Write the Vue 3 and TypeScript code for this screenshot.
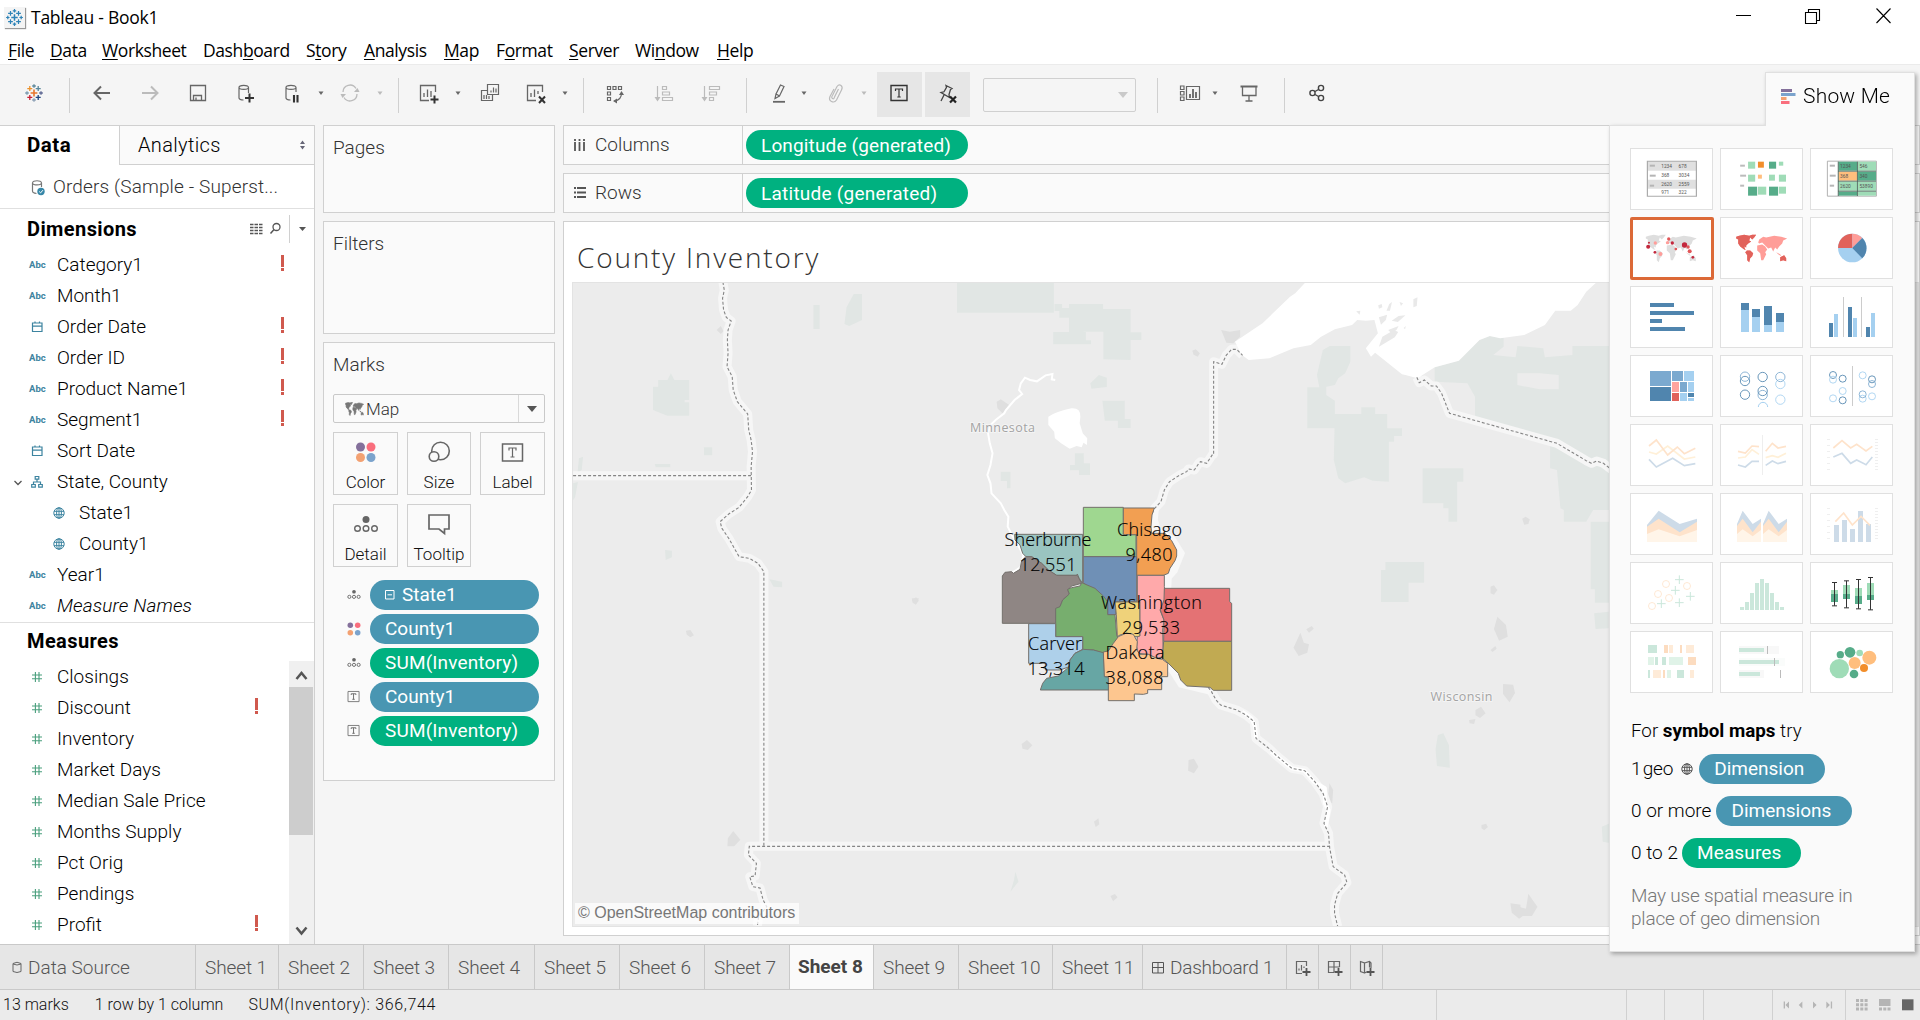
<script setup lang="ts">
interface Tool { icon: string; at: number; w?: number; kind?: string; dim?: boolean }
interface Field { name: string; icon: string; warn?: boolean; sub?: boolean; open?: boolean; italic?: boolean }

const menus = [
  ['', 'F', 'ile', 42], ['', 'D', 'ata', 52], ['', 'W', 'orksheet', 101], ['Dash', 'b', 'oard', 103],
  ['S', 't', 'ory', 58], ['', 'A', 'nalysis', 80], ['', 'M', 'ap', 52], ['F', 'o', 'rmat', 73],
  ['', 'S', 'erver', 66], ['Wi', 'n', 'dow', 82], ['', 'H', 'elp', 60],
] as const

const caret = '<path d="M9.5 10.5h5l-2.5 3.5z" fill="currentColor"/>'
const plus = (x: number, y: number, r: number, c: string, w = 1.3) =>
  `<path d="M${x - r} ${y}h${2 * r}M${x} ${y - r}v${2 * r}" stroke="${c}" stroke-width="${w}"/>`
const logo = (c: string[]) =>
  plus(12, 12, 3.4, c[0], 1.6) + plus(12, 5, 1.8, c[1]) + plus(12, 19, 1.8, c[2]) + plus(5, 12, 1.8, c[3]) +
  plus(19, 12, 1.8, c[4]) + plus(7.8, 7.6, 2.5, c[5]) + plus(16.2, 7.6, 2.5, c[6]) + plus(7.8, 16.4, 2.5, c[7]) + plus(16.2, 16.4, 2.5, c[8])
const globe = '<g fill="none" stroke="currentColor"><circle cx="12" cy="12" r="5.2"/><ellipse cx="12" cy="12" rx="2.4" ry="5.2"/><path d="M7 10.3h10M7 13.7h10M12 7v10"/></g>'
const continents = '<path d="M0 2 3 1 8 0 13 1 16 0 20 0 18 3 16 5 14 3 13 6 15 7 12 9 10 11 10 13 8 12 9 15 11 16 8 15 4 12 2 9 2 5 0 4zM11 16 14 16 17 19 16 22 14 24 13 28 11 26 11 21 9 18zM21 11 26 10 29 12 31 15 29 18 30 20 27 26 25 26 24 19 21 16zM22 8 23 5 27 2 30 3 38 1 45 2 51 4 47 6 46 9 43 12 41 15 39 13 37 17 35 13 32 14 29 11 26 8 23 9zM40 18 44 20 45 22 42 20zM44 23 48 21 50 24 50 27 47 26 44 27z"'

const icons: Record<string, string> = {
  logo: logo(['#e8762d', '#5b879b', '#8b9fb5', '#7a9aaf', '#5c6692', '#eb912b', '#59879b', '#c72035', '#1f447e']),
  blue: logo(Array(9).fill('#2f84b8')),
  caret,
  back: '<path d="M20 12H5M11 5.5 4.500 12l6.500 6.500" fill="none" stroke="currentColor" stroke-width="2"/>',
  fwd: '<path d="M4 12h15M13 5.500l6.500 6.500-6.500 6.500" fill="none" stroke="currentColor" stroke-width="2"/>',
  save: '<path d="M4.500 4.500h15v15h-15zM7.500 19.500v-5h8v5M10 19.500v-3" fill="none" stroke="currentColor" stroke-width="1.300"/>',
  dbplus: '<g fill="none" stroke="currentColor" stroke-width="1.200"><path d="M13.500 12V6.500c0-2.800-9.500-2.800-9.500 0v10.500q.5 2 4.500 2M4 6.500c0 2.500 9.500 2.500 9.500 0"/><path d="M10 17h9M14.500 12.500v9" stroke-width="2" stroke="#333"/></g>',
  dbpause: '<g fill="none" stroke="currentColor" stroke-width="1.200"><path d="M15 11V6.500c0-2.800-10-2.800-10 0v10.500q.5 2 4.500 2M5 6.500c0 2.500 10 2.500 10 0"/><path d="M13 14v7.500M16.500 14v7.500" stroke-width="2.100" stroke="#333"/></g>',
  refresh: '<g fill="none" stroke="currentColor" stroke-width="1.300"><path d="M5 11a7 7 0 0 1 13-3.500M19 13a7 7 0 0 1-13 3.500"/></g><path d="M16 11h5.500l-2-4zM8 13H2.500l2 4z" fill="currentColor"/>',
  sheetplus: '<g fill="none" stroke="currentColor" stroke-width="1.300"><path d="M18.500 11V4.500h-15v15H12M7 16v-4M10.500 16V8.500M14 16v-6"/><path d="M13.500 18.500h8M17.500 14.500v8" stroke="#333" stroke-width="2"/></g>',
  dup: '<g fill="none" stroke="currentColor" stroke-width="1.200"><path d="M9.500 3.500h11v10h-11zM9.500 9.500h-6v10h11v-6M13 11.500V9.500M15.500 11.500v-5M18 11.500v-4M6 18v-4M8.500 18v-4M11 18v-3"/></g>',
  sheetx: '<g fill="none" stroke="currentColor" stroke-width="1.300"><path d="M18.500 11V4.500h-15v15H12M7 16v-4M10.500 16V8.500M14 13v-3"/><path d="m15 15.500 6 6.500m0-6.500-6 6.500" stroke="#333" stroke-width="2"/></g>',
  swap: '<g fill="none" stroke="currentColor" stroke-width="1.200"><path d="M4.500 5.500h3v3h-3zM10 5.500h3v3h-3zM15.500 5.500h3v3h-3zM4.500 11h3v3h-3zM4.500 16.500h3v3h-3zM18.500 12q0 7-7 8"/></g><path d="m18.500 10 2.500 4h-5zM10 20l4-2.500v5z" fill="currentColor"/>',
  sorta: '<g fill="none" stroke="currentColor" stroke-width="1.200"><path d="M5.500 5v13M10.500 5.500h4v3h-4zM10.500 11h7v3h-7zM10.500 16.500h10v3h-10z"/></g><path d="M2.500 16h6l-3 4.500z" fill="currentColor"/>',
  sortd: '<g fill="none" stroke="currentColor" stroke-width="1.200"><path d="M5.500 5v13M10.500 5.500h10v3h-10zM10.500 11h7v3h-7zM10.500 16.500h4v3h-4z"/></g><path d="M2.500 16h6l-3 4.500z" fill="currentColor"/>',
  pen: '<g fill="none" stroke="currentColor" stroke-width="1.200"><path d="m9 13 4.500-9 3.500 1.500-4.500 9.500zM9 13l-1 4.500 4.500-2.500"/><path d="M6 20.800h12" stroke-width="1.800"/></g>',
  clip: '<path d="m14.500 8-4 8q-.5 2.500-2 1.500t0-3L13 5.500q2-2.500 4-1t.5 4.500l-5 10q-2 3-5 1.500t-1.500-5L10 8" fill="none" stroke="currentColor" stroke-width="1.200"/>',
  text: '<path d="M3 4.500h16v15H3z" fill="none" stroke="#333" stroke-width="1.400"/><path d="M7.500 10V8h7v2M11 8v8M9.300 16h3.400" fill="none" stroke="#333" stroke-width="1.200"/>',
  pin: '<path d="m10 4.500 6 3-1.500 1-1.500 5 .5 3-8.500-5 3-.7 2.500-4.500zM8 14l-3 6" fill="none" stroke="#444" stroke-width="1.300"/><path d="m14 15.500 6 6m0-6-6 6" stroke="#222" stroke-width="2.200"/>',
  cards: '<g fill="none" stroke="currentColor" stroke-width="1.200"><path d="M8.500 5.500h13v13h-13zM2.500 5h3.500v3.500H2.500zM2.500 10.500h3.500V14H2.500zM2.500 16h3.500v3.500H2.500z"/></g><path d="M12 17v-4M15 17V8M18 17v-6" stroke="currentColor" stroke-width="1.800"/>',
  present: '<g fill="none" stroke="currentColor" stroke-width="1.300"><path d="M5.500 6v8.500h13.500V6M12 14.500V20M8.500 20h7"/><path d="M3.500 5.500h17" stroke-width="2"/></g>',
  share: '<g fill="none" stroke="#444" stroke-width="1.400"><circle cx="7.500" cy="12" r="2.600"/><circle cx="16" cy="7" r="2.600"/><circle cx="16" cy="17" r="2.600"/><path d="m10 10.500 3.500-2M10 13.500l3.500 2"/></g>',
  date: '<path d="M7.500 8h9.500v8.500H7.500zM7.500 11.200h9.500M10 8V6.500M14.500 8V6.500" fill="none" stroke="currentColor" stroke-width="1.200"/>',
  tree: '<path d="M10.200 6.500h3.600v2.700h-3.600zM6.700 14.500h3.600v2.700H6.700zM13.700 14.500h3.600v2.700h-3.600zM12 9.200v2.800M8.500 14.500V12h7v2.500" fill="none" stroke="currentColor" stroke-width="1.200"/>',
  globe,
  hash: '<path d="M7 10h10M7 13.800h10M10.400 7v10M14 7v10" stroke="currentColor" stroke-width="1.100" fill="none"/>',
  dots: '<circle cx="9" cy="9" r="3" fill="#84709b"/><circle cx="17" cy="9" r="3" fill="#f96e7d"/><circle cx="9" cy="17" r="3" fill="#f3a172"/><circle cx="17" cy="17" r="3" fill="#7ba3cc"/>',
  detail: '<circle cx="13" cy="9.500" r="2" fill="#666"/><g fill="none" stroke="#666"><circle cx="8" cy="15" r="1.700"/><circle cx="13" cy="15" r="1.700"/><circle cx="18" cy="15" r="1.700"/></g>',
  tbox: '<path d="M6.500 7h12v11h-12z" fill="none" stroke="#777"/><path d="M10 10.800v-1.300h5v1.300M12.500 9.500v6M11.200 15.500h2.600" fill="none" stroke="#666"/>',
}

const markIcons: Record<string, string> = {
  Color: '<circle cx="11.500" cy="11" r="4.500" fill="#84709b"/><circle cx="22" cy="11" r="4.500" fill="#f96e7d"/><circle cx="11.500" cy="21.500" r="4.500" fill="#f3a172"/><circle cx="22" cy="21.500" r="4.500" fill="#7ba3cc"/>',
  Size: '<g fill="#fafafa" stroke="#666" stroke-width="1.600"><circle cx="18.500" cy="15" r="8.800"/><circle cx="12" cy="20.500" r="4.800"/></g>',
  Label: '<path d="M6.500 8h20v17h-20z" fill="none" stroke="#666" stroke-width="1.500"/><path d="M13 14.500V12h7v2.500M16.500 12v9M14.500 21h4" fill="none" stroke="#666" stroke-width="1.200"/>',
  Detail: '<circle cx="17" cy="11.500" r="3.500" fill="#666"/><g fill="none" stroke="#666" stroke-width="1.400"><circle cx="8.500" cy="20.500" r="2.800"/><circle cx="17" cy="20.500" r="2.800"/><circle cx="25.500" cy="20.500" r="2.800"/></g>',
  Tooltip: '<path d="M7 7h20v14h-4.500v4.500L17 21H7z" fill="none" stroke="#666" stroke-width="1.700"/>',
}

const toolList: Tool[] = [
  { icon: 'logo', at: 34 }, { icon: '', at: 69, kind: 'sep', w: 1 }, { icon: 'back', at: 102 }, { icon: 'fwd', at: 150, dim: true },
  { icon: 'save', at: 198 }, { icon: 'dbplus', at: 247 }, { icon: 'dbpause', at: 293 }, { icon: 'caret', at: 321 }, { icon: 'refresh', at: 350, dim: true },
  { icon: 'caret', at: 380, dim: true }, { icon: '', at: 398, kind: 'sep', w: 1 }, { icon: 'sheetplus', at: 429 }, { icon: 'caret', at: 458 },
  { icon: 'dup', at: 490 }, { icon: 'sheetx', at: 536 }, { icon: 'caret', at: 565 }, { icon: '', at: 583, kind: 'sep', w: 1 },
  { icon: 'swap', at: 615 }, { icon: 'sorta', at: 664, dim: true }, { icon: 'sortd', at: 711, dim: true }, { icon: '', at: 746, kind: 'sep', w: 1 },
  { icon: 'pen', at: 779 }, { icon: 'caret', at: 804 }, { icon: 'clip', at: 836, dim: true }, { icon: 'caret', at: 864, dim: true },
  { icon: 'text', at: 899.5, kind: 'on', w: 45 }, { icon: 'pin', at: 947.5, kind: 'on', w: 45 }, { icon: '', at: 1059.5, kind: 'combo', w: 153 },
  { icon: '', at: 1157, kind: 'sep', w: 1 }, { icon: 'cards', at: 1190 }, { icon: 'caret', at: 1215 }, { icon: 'present', at: 1249 },
  { icon: '', at: 1284, kind: 'sep', w: 1 }, { icon: 'share', at: 1317 },
]
let edge = 0
const tools = toolList.map((t) => {
  const w = t.w ?? 24
  const left = Math.round(t.at - w / 2)
  const gap = left - edge
  edge = left + w
  return { ...t, w, gap }
})

const dims: Field[] = [
  { name: 'Category1', icon: 'abc', warn: true }, { name: 'Month1', icon: 'abc' }, { name: 'Order Date', icon: 'date', warn: true },
  { name: 'Order ID', icon: 'abc', warn: true }, { name: 'Product Name1', icon: 'abc', warn: true }, { name: 'Segment1', icon: 'abc', warn: true },
  { name: 'Sort Date', icon: 'date' }, { name: 'State, County', icon: 'tree', open: true }, { name: 'State1', icon: 'globe', sub: true },
  { name: 'County1', icon: 'globe', sub: true }, { name: 'Year1', icon: 'abc' }, { name: 'Measure Names', icon: 'abc', italic: true },
]
const measures: Field[] = [
  { name: 'Closings', icon: 'hash' }, { name: 'Discount', icon: 'hash', warn: true }, { name: 'Inventory', icon: 'hash' }, { name: 'Market Days', icon: 'hash' },
  { name: 'Median Sale Price', icon: 'hash' }, { name: 'Months Supply', icon: 'hash' }, { name: 'Pct Orig', icon: 'hash' }, { name: 'Pendings', icon: 'hash' },
  { name: 'Profit', icon: 'hash', warn: true },
]
const marks = ['Color', 'Size', 'Label', 'Detail', 'Tooltip']
const pills = [
  { icon: 'detail', name: 'State1', blue: true, box: true }, { icon: 'dots', name: 'County1', blue: true },
  { icon: 'detail', name: 'SUM(Inventory)' }, { icon: 'tbox', name: 'County1', blue: true }, { icon: 'tbox', name: 'SUM(Inventory)' },
]
const sheets = [
  { name: 'Sheet 1', w: 83 }, { name: 'Sheet 2', w: 85 }, { name: 'Sheet 3', w: 85 }, { name: 'Sheet 4', w: 86 }, { name: 'Sheet 5', w: 85 },
  { name: 'Sheet 6', w: 85 }, { name: 'Sheet 7', w: 85 }, { name: 'Sheet 8', w: 84, active: true }, { name: 'Sheet 9', w: 85 },
  { name: 'Sheet 10', w: 94 }, { name: 'Sheet 11', w: 90 },
]
const newTabs = [
  '<path d="M13.500 8V3.500h-10v12H9M6 12.500v-2M8.500 12.500V7M11 10V8.500" fill="none" stroke="#666" stroke-width="1.200"/>',
  '<path d="M14.500 9V3.500h-11v11H9M3.500 9h11M9 3.500v11" fill="none" stroke="#666" stroke-width="1.200"/>',
  '<path d="M3.500 3.500v10L7.500 15V5zM7.500 5l5-1.500L14 5v5M7.500 15l2-1M12.500 3.500v6" fill="none" stroke="#666" stroke-width="1.200"/>',
]

const ringRow = (list: [number, number, string][], r: number) =>
  list.map(([x, y, c]) => `<circle cx="${x}" cy="${y}" r="${r}" fill="none" stroke="${c}" stroke-width="3" opacity=".85"/>`).join('')
const box = (x: number, y: number, w: number, h: number, c: string) => `<path d="M${x} ${y}h${w}v${h}h${-w}z" fill="${c}"/>`
const line = (pts: string, c: string, w = 5) => `<polyline points="${pts}" fill="none" stroke="${c}" stroke-width="${w}"/>`
const num = (x: number, y: number, t: string) => `<text x="${x}" y="${y}" font-size="16" font-weight="400" font-family="Roboto, sans-serif" fill="#555" textLength="${t.length * 6.8}" lengthAdjust="spacingAndGlyphs">${t}</text>`
const dot = (x: number, y: number, r: number, c: string) => `<ellipse cx="${x}" cy="${y}" rx="${r * 0.85}" ry="${r}" fill="${c}"/>`
const scales = (y: number) => {
  let s = ''
  for (let i = 0; i < 6; i++) s += box(651, y + i * 18, 9, 3, '#efefef')
  for (let i = 0; i < 11; i++) s += box(795, y + i * 9, 9, 3, '#efefef')
  return s
}
const B = '#5085ae', L = '#a5d0f0', M = '#7ba9cf', G = '#56ac89', g = '#9fdcb7', P = '#cbe7db', R = '#fee5cd'
const areas = '<path d="M381 132 398 92 428 132 453 116V186H381z" fill="#cddbe8"/><path d="M381 138 398 116 428 157 453 125V186H381z" fill="#fee3cb"/><path d="M381 162 398 148 428 169 453 150V186H381z" fill="#fff5e9"/>'
const thumbs: { vb: string; art: string; on?: boolean }[] = [
  { vb: '835 445 210 186', art: box(880, 485, 123, 28, '#e0e0e0') + box(880, 540, 123, 27, '#e0e0e0') + '<path d="M879 484.500h124v105H879z" fill="none" stroke="#aaa" stroke-width="3"/>' + box(885, 495, 13, 6, '#b5b5b5') + box(885, 525, 15, 6, '#b5b5b5') + box(885, 555, 11, 6, '#b5b5b5') + num(914, 505, '1234') + num(958, 505, '678') + num(914, 533, '368') + num(958, 533, '3034') + num(914, 559, '2620') + num(958, 559, '2559') + num(914, 583, '971') + num(958, 583, '322') },
  { vb: '1062 445 210 186', art: box(1113, 495, 12, 6, '#bbb') + box(1113, 525, 15, 6, '#bbb') + box(1113, 555, 10, 6, '#bbb') + box(1133, 486, 18, 21, g) + box(1158, 486, 15, 18, '#f28e2b') + box(1186, 486, 18, 21, G) + box(1211, 486, 11, 12, g) + box(1133, 525, 18, 21, g) + box(1158, 525, 10, 12, '#ffbe7d') + box(1186, 525, 15, 18, g) + box(1211, 525, 18, 21, g) + box(1133, 561, 23, 27, G) + box(1158, 561, 21, 24, g) + box(1186, 561, 23, 27, G) + box(1211, 561, 18, 21, g) },
  { vb: '1290 445 210 186', art: '<path d="M1334 484.500h124v105h-124z" fill="#fff" stroke="#aaa" stroke-width="2.500"/>' + box(1340, 495, 13, 6, '#b5b5b5') + box(1340, 525, 15, 6, '#b5b5b5') + box(1340, 555, 11, 6, '#b5b5b5') + box(1362, 486, 47, 27, G) + box(1411, 486, 46, 27, g) + box(1362, 516, 47, 27, '#ffbe7d') + box(1411, 516, 46, 27, G) + box(1362, 546, 47, 27, g) + box(1411, 546, 46, 27, g) + box(1362, 576, 47, 12, G) + box(1411, 576, 46, 12, g) + '<path d="M1361.500 486v103M1410 486v103M1361 514.500h96M1361 544.500h96M1361 574.500h96" stroke="#4b6459" stroke-width="2.500"/>' + num(1366, 504, '1234') + num(1415, 504, '546') + num(1366, 536, '368') + num(1415, 536, '340') + num(1366, 566, '2620') + num(1415, 566, '53890') },
  { vb: '835 652 210 186', on: true, art: `<g transform="translate(875 705) scale(2.529 2.950)">${continents} fill="#dedede"/></g>` + dot(881, 741, 6, '#c3283d') + dot(883, 729, 3, '#c3283d') + dot(899, 730, 5, '#ff9d9a') + dot(933, 718, 5, '#e15759') + dot(930, 729, 5, '#ff9d9a') + dot(942, 730, 5, '#c3283d') + dot(973, 736, 8, '#c3283d') + dot(951, 748, 4, '#e15759') + dot(982, 742, 5, '#e15759') + dot(986, 755, 6, '#e15759') + dot(898, 758, 4, '#c3283d') + dot(912, 763, 6, '#ff9d9a') + dot(994, 773, 4, '#c3283d') },
  { vb: '1062 652 210 186', art: `<g transform="translate(1103 705) scale(2.529 2.950)">${continents} fill="#ff9d98"/><path d="M0 2 3 1 8 0 13 1 16 0 20 0 18 3 16 5 14 3 13 6 15 7 12 9 10 11 10 13 8 12 9 15 11 16 8 15 4 12 2 9 2 5 0 4zM11 16 14 16 17 19 16 22 14 24 13 28 11 26 11 21 9 18zM44 23 48 21 50 24 50 27 47 26 44 27z" fill="#e1625b"/></g>` },
  { vb: '1290 652 210 186', art: '<g transform="translate(1397 745) scale(36 43)"><circle r="1" fill="#a5d0f0"/><path d="M0 0V-1A1 1 0 0 0-1 0z" fill="#e1625b"/><path d="M0 0V-1A1 1 0 0 1 .7-.7z" fill="#ff9d98"/><path d="M0 0 .7-.7A1 1 0 0 1 .7.72z" fill="#5085ae"/></g>' },
  { vb: '60 18 249 186', art: box(120, 69, 72, 12, B) + box(120, 93, 132, 12, B) + box(120, 117, 36, 12, B) + box(120, 141, 105, 12, B) },
  { vb: '330 18 249 186', art: box(393, 69, 24, 21, B) + box(393, 90, 24, 66, L) + box(426, 87, 24, 24, B) + box(426, 111, 24, 45, L) + box(462, 78, 24, 57, B) + box(462, 135, 24, 21, L) + box(498, 99, 24, 27, B) + box(498, 126, 24, 30, L) },
  { vb: '600 18 249 186', art: box(657, 129, 12, 42, B) + box(672, 102, 12, 69, L) + box(699, 51, 3, 120, '#ccc') + box(714, 81, 12, 90, B) + box(729, 114, 12, 57, L) + box(753, 51, 3, 120, '#ccc') + box(768, 141, 12, 30, B) + box(783, 99, 12, 72, L) },
  { vb: '60 225 249 186', art: box(120, 273, 63, 45, M) + box(120, 321, 63, 42, B) + box(186, 273, 33, 30, M) + box(222, 273, 30, 30, L) + box(186, 306, 21, 30, '#ffa49e') + box(210, 306, 21, 30, M) + box(234, 306, 18, 30, L) + box(186, 339, 21, 24, '#e1625b') + box(210, 339, 21, 24, L) + box(234, 339, 18, 12, B) + box(234, 354, 18, 9, L) },
  { vb: '330 225 249 186', art: ringRow([[405, 303, B], [405, 290, M], [405, 344, B], [458, 291, B], [458, 345, M], [458, 333, B], [511, 312, L], [511, 291, M], [511, 359, L]], 14) + '<path d="M445 381a14 14 0 0 1 28 0" fill="none" stroke="#a5d0f0" stroke-width="3"/>' },
  { vb: '600 225 249 186', art: ringRow([[669, 285, B], [669, 299, L], [698, 296, B], [698, 333, L], [669, 355, L], [698, 361, B], [758, 286, L], [786, 298, B], [786, 312, M], [758, 356, L], [758, 343, M], [786, 349, L]], 10.5) + box(726, 258, 3, 120, '#ccc') },
  { vb: '60 432 249 186', art: line('117,516 139,522 173,498 223,537 256,531', '#fff0d8') + line('117,498 139,480 173,525 202,501 223,521 256,505', '#fee3cb') + line('117,538 139,561 188,535 223,557 256,551', '#cddbe8') },
  { vb: '330 432 249 186', art: line('384,534 406,531 426,509 447,523', '#fff0d8') + line('384,514 406,519 426,498 447,500', '#fee3cb') + line('384,555 406,561 426,544 447,544', '#cddbe8') + line('467,514 487,490 504,504 528,499', '#fee3cb') + line('467,533 487,527 504,532 528,520', '#fff0d8') + line('467,556 487,543 504,551 528,544', '#cddbe8') + box(456, 465, 3, 120, '#eee') },
  { vb: '600 432 249 186', art: scales(477) + line('670,504 696,482 722,504 740,493 768,513 787,499', '#fee3cb') + line('670,531 696,520 722,550 740,540 768,554 787,531', '#cddbe8') },
  { vb: '60 39 249 186', art: '<path d="M111 135 146 92 209 132 261 116V186H111z" fill="#cddbe8"/><path d="M111 140 146 116 209 157 261 125V186H111z" fill="#fee3cb"/><path d="M111 162 146 148 209 169 261 150V186H111z" fill="#fff5e9"/>' },
  { vb: '330 39 249 186', art: `${areas}<g transform="translate(78 0)">${areas}</g>` },
  { vb: '600 39 249 186', art: scales(84) + box(672, 135, 15, 51, '#cddbe8') + box(696, 120, 15, 66, '#cddbe8') + box(720, 147, 15, 39, '#cddbe8') + box(744, 93, 15, 93, '#cddbe8') + box(768, 132, 15, 54, '#cddbe8') + line('676,125 701,99 727,135 753,109 780,136', '#fee3cb') },
  { vb: '60 246 249 186', art: ringRow([[168, 312, R], [144, 342, R], [177, 354, R], [231, 318, R], [126, 378, R]], 10.5) + plus(208, 299, 13, P, 3) + plus(196, 331, 13, P, 3) + plus(241, 349, 13, P, 3) + plus(208, 368, 13, P, 3) + plus(154, 371, 13, P, 3) },
  { vb: '330 246 249 186', art: [9, 24, 51, 81, 93, 81, 51, 24, 9].map((h, i) => box(390 + i * 15, 390 - h, 12, h, P)).join('') },
  { vb: '600 246 249 186', art: ([[663, 307, 377, 330, 342, 366], [699, 302, 383, 315, 342, 357], [735, 298, 386, 324, 348, 372], [771, 292, 389, 309, 345, 360]] as number[][]).map(([x, a, b, c, d, e]) => box(x, c, 21, d - c, g) + box(x, d, 21, e - d, G) + box(x + 9, a, 3, b - a, '#333') + box(x + 3, a - 1, 15, 3, '#333') + box(x + 3, b - 1, 15, 3, '#333')).join('') },
  { vb: '60 453 249 186', art: box(114, 495, 27, 24, P) + box(162, 495, 12, 24, '#fcdcc0') + box(177, 495, 12, 24, '#feebd8') + box(210, 495, 6, 24, '#fcdcc0') + box(228, 495, 24, 24, '#feebd8') + box(114, 531, 18, 24, '#e0f3e8') + box(135, 531, 9, 24, P) + box(156, 531, 12, 24, P) + box(177, 531, 42, 24, '#e0f3e8') + box(234, 531, 24, 24, '#fcdcc0') + box(114, 570, 6, 24, P) + box(129, 570, 24, 24, '#feebd8') + box(159, 570, 6, 24, '#fcdcc0') + box(171, 570, 12, 24, '#e0f3e8') + box(201, 570, 21, 24, P) + box(240, 570, 12, 24, '#feebd8') },
  { vb: '330 453 249 186', art: box(387, 498, 120, 24, '#f8f8f8') + box(387, 534, 138, 24, '#fafcfb') + box(387, 570, 75, 24, '#f8f8f8') + box(387, 504, 75, 12, P) + box(387, 540, 120, 12, P) + box(387, 576, 63, 12, P) + box(471, 498, 3, 24, '#bbb') + box(492, 534, 3, 24, '#bbb') + box(510, 570, 3, 24, '#bbb') },
  { vb: '600 453 249 186', art: ([[688, 566, 29, g], [691, 524, 11, G], [720, 517, 16, G], [749, 519, 10, g], [778, 533, 21, '#ffbe7d'], [734, 549, 18, '#ffbe7d'], [762, 564, 12, '#f28e2b'], [732, 582, 13, G]] as [number, number, number, string][]).map(([x, y, r, c]) => `<circle cx="${x}" cy="${y}" r="${r}" fill="${c}"/>`).join('') },
]

const counties = [
  { c: '#9fd790', d: 'M310 52H430V134H468V200H310Z' },
  { c: '#f29f52', d: 'M430 54H523L516 75 513 110 515 130H555L575 152 590 180V198L585 212 570 235 565 250 550 256H470V134H430Z' },
  { c: '#9ac4c0', d: 'M104 133H308V280L298 266 292 252 290 256H230L205 240 185 220 155 200 138 200 128 190 120 165 105 150Z' },
  { c: '#6f90b6', d: 'M310 200H470V335H408V374H383V340L370 325 345 300 325 290 310 278Z' },
  { c: '#8f8684', d: 'M67 258 75 247 95 245 100 250 120 238 125 212 138 200 155 200 185 220 205 240 230 256H292L305 280 275 288 263 300 268 312 248 330 240 350 227 358V400H67Z' },
  { c: '#77ae6e', d: 'M227 355 240 350 248 330 268 312 263 298 275 293 300 288 305 278 345 295 370 318 383 335V374H405L410 435 415 445 400 465 385 485 365 488 340 480H308V440H227Z' },
  { c: '#efd27a', d: 'M405 336H480V440H455L440 430 420 435 412 440 409 374Z' },
  { c: '#ffa9aa', d: 'M472 256H553V290L556 320 550 340 540 360 552 390 548 420 550 500 530 505 505 493 475 490 470 470 472 440 480 438V334H472Z' },
  { c: '#e47274', d: 'M553 295H749V335L755 340V454H551L552 390 541 360 552 330Z' },
  { c: '#c1aa52', d: 'M551 454H755V601H700L690 592 620 588 602 570 595 550 560 515 547 505Z' },
  { c: '#fdc68f', d: 'M370 486 385 483 400 460 415 440 440 429 460 433 472 455 470 480 480 493 505 493 530 505 547 508 563 520V560H545V599H503V610L490 613 463 612V632H385V560H372Z' },
  { c: '#aed0ea', d: 'M146 401H227V440H308V478L285 490 270 510 268 530 240 540H196V520H146Z' },
  { c: '#67a6a4', d: 'M181 600 188 580 200 565 235 558 268 530 270 510 285 490 310 478 340 480 370 488 373 560 385 562V600Z' },
]
const labels = [
  { x: 1048, y: 546, t: 'Sherburne', w: 87 }, { x: 1048, y: 571, t: '12,551', w: 57 }, { x: 1149.5, y: 536, t: 'Chisago', w: 65 }, { x: 1149, y: 561, t: '9,480', w: 47 },
  { x: 1151.5, y: 609, t: 'Washington', w: 101 }, { x: 1151, y: 634, t: '29,533', w: 58 }, { x: 1055, y: 650, t: 'Carver', w: 54 }, { x: 1056, y: 675, t: '13,314', w: 57 },
  { x: 1135, y: 659, t: 'Dakota', w: 59 }, { x: 1134.500, y: 684, t: '38,088', w: 58 },
]
const borders = [
  { m: 'translate(560 220) scale(.34438 .33333)', d: 'M473 186 477 210 472 235 475 270 483 292 497 303 488 330 486 360 488 400 485 440 500 470 503 510 515 545 545 582 548 630 555 660 559 695 555 740 556 810 545 830 520 862 490 882 465 905 470 925 490 955 520 1010 550 1015 575 1030 592 1055V1880M38 767H556' },
  { m: 'translate(560 600) scale(.44643 .33333)', d: 'M1725 739H424L422 765 440 790 437 828 425 830 432 860 448 864 455 900 463 920 445 950 442 978' },
  { m: 'translate(1080 270) scale(.34438 .33333)', d: 'M210 730 216 716 235 695 245 660 260 635 290 615 310 605 315 597 332 600 345 580 350 575 368 580 385 553H388V275L412 283 425 255 432 248 440 238H455L472 256M978 322 985 338 1000 330 1020 348H1035L1050 370 1073 430 1385 520 1470 572 1485 580 1500 573 1520 580 1545 600' },
  { m: 'translate(1200 660) scale(.45918 .33333)', d: 'M18 82 25 95 35 120 45 135 80 150 100 165 118 185 122 235 150 265 165 285 200 325 228 332 250 365 268 400 278 440 270 490 280 520 282 560 290 620 315 645 320 668 300 700 293 735V760L300 800' },
]
const statusCells = [190, 38, 39, 69]
</script>

<template>
  <div class="app">
    <header class="title">
      <svg class="ticon" viewBox="1 1 22 22" v-html="icons.blue" /><span>Tableau - Book1</span>
      <svg class="win" viewBox="0 0 160 24"><path d="M0 12.500h15M69.500 9.500h11v11h-11zM72.500 9V6.500H83.500V17.500H81M140.500 5.500l14 14.500M154.500 5.500l-14 14.500" fill="none" stroke="#000" stroke-width="1.100" /></svg>
    </header>
    <nav class="menu">
      <span v-for="m in menus" :key="m[1] + m[2]" :style="{ width: m[3] + 'px' }">{{ m[0] }}<u>{{ m[1] }}</u>{{ m[2] }}</span>
    </nav>
    <div class="toolbar">
      <div v-for="(t, i) in tools" :key="i" :class="['tool', t.kind, { dim: t.dim }]" :style="{ width: t.w + 'px', marginLeft: t.gap + 'px' }">
        <svg v-if="t.icon" width="24" height="24" viewBox="0 0 24 24" v-html="icons[t.icon]" />
        <i v-if="t.kind === 'combo'" class="tri" />
      </div>
    </div>

    <main class="work">
      <aside class="data">
        <div class="tabs">
          <b class="tab-on">Data</b>
          <div class="tab-off"><span>Analytics</span><svg width="8" height="12" viewBox="0 0 8 12"><path d="M1 5h5L3.500 1.500zM1 7h5L3.500 10.500z" fill="#667" /></svg></div>
        </div>
        <div class="source">
          <svg width="18" height="20" viewBox="0 0 18 20"><path d="M12.500 9V5c0-3-9-3-9 0v8q0 2 4 2.500M3.500 5c0 2.500 9 2.500 9 0" fill="none" stroke="#777" stroke-width="1.200" /><circle cx="12" cy="13.500" r="3.700" fill="#3787a8" /><path d="m10.200 13.500 1.400 1.400 2.300-2.700" fill="none" stroke="#fff" /></svg>
          <span>Orders (Sample - Superst...</span>
        </div>
        <div class="head dimhead">
          <b>Dimensions</b>
          <svg width="64" height="28" viewBox="0 0 64 28"><path d="M0 9.500h13M0 12.500h13M0 15.500h13M0 18.500h13" stroke="#555" stroke-width="1.300" stroke-dasharray="3.500 1" /><circle cx="26.500" cy="12" r="3.500" fill="none" stroke="#555" stroke-width="1.300" /><path d="m24 14.500-3.500 4" stroke="#555" stroke-width="1.500" /><path d="M39.500 0v28" stroke="#d0d0d0" /><path d="M49 12h7l-3.500 4z" fill="#555" /></svg>
        </div>
        <div class="list dimlist">
          <div v-for="f in dims" :key="f.name" :class="['field', { sub: f.sub, italic: f.italic }]">
            <svg v-if="f.open" class="chev" width="8" height="6" viewBox="0 0 8 6"><path d="m.5 1 3.500 3.500L7.500 1" fill="none" stroke="#555" stroke-width="1.300" /></svg>
            <span v-if="f.icon === 'abc'" class="abc">Abc</span>
            <svg v-else class="ficon" width="24" height="24" viewBox="0 0 24 24" v-html="icons[f.icon]" />
            <span class="fname">{{ f.name }}</span><i v-if="f.warn" class="warn" />
          </div>
        </div>
        <div class="head meahead"><b>Measures</b></div>
        <div class="measures">
          <div class="list">
            <div v-for="f in measures" :key="f.name" class="field green">
              <svg class="ficon" width="24" height="24" viewBox="0 0 24 24" v-html="icons.hash" />
              <span class="fname">{{ f.name }}</span><i v-if="f.warn" class="warn" />
            </div>
          </div>
          <div class="scroll">
            <svg width="24" height="26" viewBox="0 0 24 26"><path d="m7.500 18 5-6 5 6" fill="none" stroke="#555" stroke-width="2.500" /></svg>
            <div class="thumb" />
            <svg width="24" height="26" viewBox="0 0 24 26"><path d="m7.500 9.500 5 6 5-6" fill="none" stroke="#555" stroke-width="2.500" /></svg>
          </div>
        </div>
      </aside>

      <section class="cards">
        <div class="card pages">Pages</div>
        <div class="card filters">Filters</div>
        <div class="card marks">
          Marks
          <div class="select">
            <svg width="19" height="14" viewBox="-1 -1 53 30" preserveAspectRatio="none" v-html="continents + ' fill=\'#777\' stroke=\'#777\' stroke-width=\'1.500\'/>'" />
            <span>Map</span><i><b class="tri" /></i>
          </div>
          <div class="mgrid">
            <div v-for="m in marks" :key="m" class="mbtn"><svg width="34" height="34" viewBox="0 0 34 34" v-html="markIcons[m]" /><span>{{ m }}</span></div>
          </div>
          <div v-for="(p, i) in pills" :key="i" class="prow">
            <svg width="24" height="24" viewBox="0 0 26 26" v-html="icons[p.icon]" />
            <span :class="['pill', { blue: p.blue }]"><svg v-if="p.box" width="17" height="10" viewBox="0 0 17 10"><path d="M.5.5h8.500v8.500H.5zM2.500 4.800h4.500" fill="none" stroke="#fff" /></svg>{{ p.name }}</span>
          </div>
        </div>
      </section>

      <section class="view">
        <div class="shelf">
          <label><svg width="14" height="14" viewBox="0 0 14 14"><path d="M2 4v9M6.500 4v9M11 4v9M2 1v2M6.500 1v2M11 1v2" stroke="#555" stroke-width="1.800" /></svg>Columns</label>
          <span class="pill">Longitude (generated)</span>
        </div>
        <div class="shelf">
          <label><svg width="14" height="14" viewBox="0 0 14 14"><path d="M4 2h9M4 6.500h9M4 11h9M1 2h2M1 6.500h2M1 11h2" stroke="#555" stroke-width="1.800" /></svg>Rows</label>
          <span class="pill lat">Latitude (generated)</span>
        </div>
        <div class="canvas">
          <h1>County Inventory</h1>
          <svg class="map" width="1347" height="645" viewBox="572 282 1347 645">
            <g fill="#e1e6e4">
              <path transform="translate(560 220) scale(.34438 .33333)" d="M1153 188H1434V278H1153ZM1436 252h22v12h20v-12h42v84h-42v-43h-28v-20h-14zM1432 336h95v25h15v12h-110zM270 500H285V480H312L322 460 332 480H375V540H362V547H375V587H312L270 570ZM853 222H877V300L840 318 826 312 832 262ZM736 255h18v72h-18zM418 682h24v24h-24zM1495 700h26v30h18v35h-32v-14h-26v-16h14zM1280 755h28v50h-10v-22h-18zM608 1078L645 1085V1102L620 1100ZM305 990l20 2v20l-18 8zM275 732h45v10h-42zM55 715l12-5-4 40-12 8zM38 790l14-4-8 45-6 10z" />
              <path transform="translate(1080 270) scale(.34438 .33333)" d="M-15 102H67V117H147V187H178V210H147V270L68 268V185H-15ZM1030 292L1100 272 1160 210 1190 198 1230 204V230L1200 255 1265 262 1270 228 1345 235 1350 262 1430 255V228H1545V720H1490L1470 755H1405V720L1395 715 1385 600 1365 595V520L1147 455V380L1125 340 1030 335ZM1483 755h60v243h-48v-40h-12v-78zM1493 1030l42-5v50l-38 2zM705 240L725 228H785V275L770 310 750 325 740 345 715 350V375L740 392V475H660V352H695L688 315ZM740 432H817V412H857V432H892V475H935V498H912V515H897V635L850 632 825 622 770 640 750 625 737 570ZM995 595h118v40h-18v120h-25v-40h-15v-15h-60zM887 876h112v62h-45v58h-80v-96h13zM65 392h65v55h17v27h-37v-22h-38zM30 340l25-25 23 8v28l-45 5zM0 560h10v25h18v30H0z" />
              <path transform="translate(1200 660) scale(.45918 .33333)" d="M518 225l12-5 12 35 2 68-28-5-3-50zM875 500l20-12v62l-18-5z" />
              <path transform="translate(560 600) scale(.44643 .33333)" d="M1020 815l7 30-18 30 8-35z" />
            </g>
            <g fill="#dfdfdf">
              <path transform="translate(1080 270) scale(.34438 .33333)" d="M410 180L435 185 465 180V200L445 220 425 218ZM326 242l10-4 12 12-6 10-12-6zM1284 746l10-6 12 8-4 14-12 2zM1192 950l10-4 10 14-10 14-10-4zM1212 1040l25 25 5 35-25 12-15-35zM640 1088l10 30 15 5-5 25-25 10-15-25zM657 1078l16-10 6 8-14 12zM1192 1140l14-12 4 8-12 10z" />
              <path transform="translate(560 220) scale(.34438 .33333)" d="M1268 545 1280 538 1304 555 1285 580 1270 565ZM1022 1140l12-8 8 10-10 12zM455 330l12-12 8 16-8 8z" />
              <path transform="translate(1200 660) scale(.45918 .33333)" d="M660 72l22 2 4 25-12 28-14-25zM600 150l12-10 10 20-12 14-10-8zM586 180l14-3-3 15-10-2zM676 730l22 4 0 8 12 4 5-45 12 24 8 15-12 28-20 0-8 8-16-18zM613 495l10-4 4 10-8 10-6-6zM282 370l8 20-2 40-10-10z" />
              <path transform="translate(560 600) scale(.44643 .33333)" d="M282 92l10-2 8 16-8 6-8-8zM376 715l12-22 16 26-14 20h-15zM788-5h16l-6 18-8-4zM1034 432l12-12 12 16-10 14-12-4zM1408 480l12-4 10 24-10 20-13-8zM1196 665l10-10 2 18-8 8zM1233 888l10-6 6 10-10 12z" />
            </g>
            <path fill="#ececec" transform="translate(1080 270) scale(.34438 .33333)" d="M1270 310H1335L1390 315V358H1335L1270 345Z" />
            <g v-for="(b, i) in borders" :key="i" :transform="b.m" fill="none" stroke-linejoin="round">
              <path :d="b.d" class="halo" />
            </g>
            <path fill="none" stroke="#f8f8f8" stroke-width="9" transform="translate(980 490) scale(.33333)" vector-effect="non-scaling-stroke" d="M523 54 520 90 530 125 575 150 600 190 580 240 562 260 560 300M550 510 580 540 605 580 690 600" />
            <g fill="#fff">
              <path transform="translate(560 220) scale(.34438 .33333)" d="M1418 590Q1440 575 1485 565 1512 563 1511 590L1509 610 1518 640 1531 655 1530 675 1520 668 1515 682 1500 678 1480 686 1455 670 1437 655 1435 635 1418 615Z" />
              <path transform="translate(1080 270) scale(.34438 .33333)" d="M655 37H1500L1470 65 1445 105 1425 122H1380L1350 165 1320 180 1290 195 1220 205 1190 198 1160 210 1100 272 1030 292 980 325 945 315 935 313 857 248 845 260 830 235 865 190 855 150 830 152 805 150 790 165 740 178 700 200 670 225 620 235 550 265 490 270 470 255 450 215 530 160 560 130 610 80 625 70Z" />
            </g>
            <path fill="#e9e9e9" transform="translate(1080 270) scale(.34438 .33333)" d="M802 124l12-2-2 12zM866 106l10-4 2 10-10 4zM890 122l8-20 8-6-6 26zM928 96l10 4-6 8zM968 88l12-6-2 26-10 4zM905 152l20-14 20-2-22 20zM868 142l24-8-4 16-14 14zM868 230l10-30 34-20 12 6-10 16zM895 180l30-12-6 12-16 8zM940 174l6-6-2 10z" />
            <g fill="none" stroke="#fff" stroke-width="2">
              <path vector-effect="non-scaling-stroke" transform="translate(560 220) scale(.34438 .33333)" d="M1438 480 1428 478 1430 462 1410 466 1385 484 1365 480 1350 473 1338 490 1333 510 1342 522 1320 540 1295 570 1290 580 1265 600 1250 615 1243 640 1248 670 1256 700 1250 735 1241 765 1250 790 1253 820 1280 850 1290 870 1302 890 1300 920 1315 950 1335 985 1345 1005 1340 1040 1310 1060" />
              <path stroke-width="4" stroke-linejoin="round" vector-effect="non-scaling-stroke" transform="translate(1200 660) scale(.45918 .33333)" d="M92 155 112 175 120 200 122 235M155 275 200 325 228 332 248 365 272 385 272 430 280 450 274 500" />
            </g>
            <g v-for="(b, i) in borders" :key="'d' + i" :transform="b.m" fill="none"><path :d="b.d" class="dash" /></g>
            <g transform="translate(980 490) scale(.33333)" stroke="#74706c" stroke-width="1" stroke-linejoin="round">
              <path v-for="c in counties" :key="c.c" :d="c.d" :fill="c.c" vector-effect="non-scaling-stroke" />
            </g>
            <rect x="572.5" y="282.5" width="1346" height="644" fill="none" stroke="#e3e3e3" />
            <g class="place"><text x="970" y="432" textLength="65">Minnesota</text><text x="1430.500" y="701" textLength="62">Wisconsin</text></g>
            <g class="lab"><text v-for="l in labels" :key="l.t" :x="l.x - l.w / 2" :y="l.y" :textLength="l.w">{{ l.t }}</text></g>
          </svg>
          <span class="osm">© OpenStreetMap contributors</span>
        </div>
      </section>
    </main>

    <footer class="sheets">
      <div class="sheet src"><svg width="10" height="13" viewBox="0 0 10 13"><path d="M1 2.500Q5 0 9 2.500V10.500Q5 12.500 1 10.500ZM1 3Q5 5 9 3" fill="none" stroke="#666" /></svg>Data Source</div>
      <div v-for="s in sheets" :key="s.name" :class="['sheet', { active: s.active }]" :style="{ width: s.w + 'px' }">{{ s.name }}</div>
      <div class="sheet dash1"><svg width="13" height="12" viewBox="0 0 13 12"><path d="M.5.500h11v10.500H.5zM6 .5v10.500M.5 5.500h11" fill="none" stroke="#555" /></svg>Dashboard 1</div>
      <div v-for="(n, i) in newTabs" :key="i" class="sheet newtab"><svg width="20" height="20" viewBox="0 0 20 20"><g v-html="n" /><path d="M9.500 14h8M13.500 10v8" stroke="#555" stroke-width="1.800" /></svg></div>
    </footer>
    <footer class="status">
      <span>13 marks</span><span>1 row by 1 column</span><span class="sum">SUM(Inventory): 366,744</span>
      <div class="cells">
        <i v-for="(w, i) in statusCells" :key="i" :style="{ width: w + 'px' }" />
        <div class="navs"><svg width="72" height="12" viewBox="0 0 72 12"><path d="M9 2v8L5 6zM3 2h1.500v8H3zM24 2v8l-4-4zM36 2v8l4-4zM51 2v8l4-4zM56 2h1.500v8H56z" fill="#b5b5b5" /></svg></div>
        <div class="modes"><svg width="60" height="12" viewBox="0 0 60 12"><path d="M0 0h3v3H0zM4.300 0h3v3h-3zM8.600 0h3v3h-3zM0 4.300h3v3H0zM4.300 4.300h3v3h-3zM8.600 4.300h3v3h-3zM0 8.600h3v3H0zM4.300 8.600h3v3h-3zM8.600 8.600h3v3h-3zM23 0h11.500v7H23zM23 8.500h3v3h-3zM27.300 8.500h3v3h-3zM31.500 8.500h3v3h-3z" fill="#b5b5b5" /><path d="M46 .3h11.500v11H46z" fill="#666" /></svg></div>
      </div>
    </footer>

    <aside class="showme">
      <div class="smtab"><svg width="15" height="15" viewBox="0 0 15 15"><path d="M0 0h11v3H0z" fill="#84709b" /><path d="M0 4h14.500v3H0z" fill="#7ba3cc" /><path d="M0 8h5.500v3H0z" fill="#f3a172" /><path d="M0 12h8.500v3H0z" fill="#f96e7d" /></svg>Show Me</div>
      <div class="smbody">
        <div class="smgrid">
          <div v-for="(t, i) in thumbs" :key="i" :class="['cell', { on: t.on }]"><svg width="83" height="62" :viewBox="t.vb" preserveAspectRatio="none" v-html="t.art" /></div>
        </div>
        <p class="for">For <b>symbol maps</b> try</p>
        <p class="need geo"><span>1 geo</span><svg width="22" height="24" viewBox="1 0 22 24" v-html="icons.globe" /><span class="pill blue d1">Dimension</span></p>
        <p class="need">0 or more<span class="pill blue d2">Dimensions</span></p>
        <p class="need">0 to 2<span class="pill d3">Measures</span></p>
        <p class="may">May use spatial measure in<br>place of geo dimension</p>
      </div>
    </aside>
  </div>
</template>

<style>
body { overflow: hidden; }
</style>
<style scoped>
* { box-sizing: border-box; }
.app { position: relative; width: 1920px; height: 1020px; display: flex; flex-direction: column; background: #f5f5f5; font: 300 19px/24px Roboto, "Open Sans", sans-serif; color: #000; overflow: hidden; white-space: nowrap; }
.title { height: 34px; background: #fff; display: flex; align-items: center; padding-left: 4px; font: 400 17.500px/34px "Open Sans", sans-serif; letter-spacing: -.25px; }
.ticon { width: 21px; height: 21px; margin-right: 6px; background: #f4f4f4; box-shadow: 1px 1px 1px #999; }
.win { width: 160px; height: 24px; margin: -4px 24px 0 auto; }
.menu { height: 31px; background: #fff; border-bottom: 1px solid #ebebeb; padding-left: 8px; display: flex; font: 400 17.500px/32px "Open Sans", sans-serif; letter-spacing: -.4px; }
.menu span { flex: none; }
.menu u { text-underline-offset: 2px; text-decoration-thickness: 1px; }
.toolbar { height: 60px; display: flex; align-items: center; color: #666; padding-bottom: 2px; }
.tool { flex: none; height: 45px; display: flex; align-items: center; justify-content: center; }
.tool svg { margin-top: -2px; }
.tool.dim { color: #bbb; }
.tool.sep { height: 35px; background: #d0d0d0; margin-top: 2px; }
.tool.on { background: #e6e6e6; }
.tool.combo { height: 34px; border: 1px solid #d0d0d0; border-radius: 2px; justify-content: flex-end; padding-right: 7px; margin-top: 1px; }
.tri { border: 5px solid transparent; border-top: 6px solid #c9c9c9; border-bottom: 0; }
.work { height: 819px; display: flex; }
.data { width: 315px; background: #fff; border: 1px solid #d0d0d0; border-width: 1px 1px 0 0; display: flex; flex-direction: column; flex: none; }
.tabs { height: 39px; display: flex; line-height: 38px; flex: none; }
.tab-on { width: 119px; padding-left: 27px; font-size: 20.500px; font-weight: 700; letter-spacing: .5px; }
.tab-off { flex: 1; background: #fafafa; border: 1px solid #d0d0d0; border-width: 0 0 1px 1px; padding: 0 7px 0 18px; display: flex; justify-content: space-between; align-items: center; font-size: 20px; letter-spacing: .35px; }
.source { height: 44px; flex: none; border-bottom: 1px solid #e0e0e0; display: flex; align-items: center; padding-left: 29px; color: #333; letter-spacing: .13px; }
.source svg { margin-right: 6px; margin-top: 2px; }
.head b { font-weight: 700; font-size: 20px; letter-spacing: .4px; }
.dimhead { height: 39px; flex: none; padding: 1px 0 0 27px; display: flex; align-items: center; justify-content: space-between; }
.dimlist { height: 375px; flex: none; border-bottom: 1px solid #e0e0e0; padding-top: 1px; }
.field { height: 31px; display: flex; align-items: center; position: relative; padding-left: 25px; color: #3d84a0; }
.field.green { color: #4a9f7d; }
.field.sub { padding-left: 47px; }
.field.italic { font-style: italic; letter-spacing: .15px; }
.fname { color: #000; margin-left: 8px; }
.ficon { flex: none; }
.abc { width: 24px; padding-left: 4px; font: 700 9.500px/12px Roboto, sans-serif; font-style: normal; letter-spacing: 0; }
.chev { position: absolute; left: 14px; top: 14px; }
.warn { position: absolute; left: 281px; top: 6px; width: 3px; height: 16px; background: linear-gradient(#d0594e 12px, transparent 12px 13px, #d0594e 13px); }
.green .warn { left: 255px; }
.meahead { height: 38px; flex: none; padding: 6px 0 0 27px; }
.measures { display: flex; flex: 1; }
.measures .list { width: 289px; }
.scroll { width: 25px; background: #f0f0f0; display: flex; flex-direction: column; }
.thumb { width: 24px; height: 148px; background: #cdcdcd; margin-bottom: auto; }
.cards { width: 232px; margin-left: 8px; display: flex; flex-direction: column; gap: 8px; flex: none; }
.card { border: 1px solid #d0d0d0; background: #fafafa; padding: 10px 9px; color: #333; }
.pages { height: 88px; }
.filters { height: 113px; }
.marks { height: 439px; }
.select { margin-top: 17px; height: 29px; border: 1px solid #c9c9c9; border-radius: 2px; display: flex; align-items: center; padding-left: 11px; font-size: 17px; }
.select span { margin-left: 2px; }
.select i { margin-left: auto; width: 26px; height: 27px; border-left: 1px solid #d9d9d9; display: flex; align-items: center; justify-content: center; }
.select .tri { border-top-color: #555; }
.mgrid { margin-top: 9px; display: grid; grid-template-columns: 65px 64px 65px; column-gap: 9px; row-gap: 9px; }
.mbtn { height: 63px; border: 1px solid #d0d0d0; display: flex; flex-direction: column; align-items: center; padding-top: 3px; font-size: 17px; line-height: 24px; color: #111; }
.prow { display: flex; align-items: center; height: 30px; margin-top: 4px; padding-left: 9px; }
.mgrid + .prow { margin-top: 13px; }
.prow .pill { width: 169px; margin-left: 4px; padding-left: 15px; }
.pill { display: inline-flex; align-items: center; height: 30px; border-radius: 15px; background: #00b180; color: #fff; padding: 0 0 0 15px; font-weight: 400; letter-spacing: .15px; }
.pill.blue { background: #4996b2; letter-spacing: 0; }
.view { width: 1357px; margin-left: 8px; display: flex; flex-direction: column; gap: 8px; }
.shelf { height: 40px; background: #fafafa; border: 1px solid #d0d0d0; display: flex; align-items: center; }
.shelf label { width: 179px; height: 38px; border-right: 1px solid #d0d0d0; display: flex; align-items: center; padding-left: 9px; color: #333; margin-right: 3px; }
.shelf label svg { margin-right: 8px; }
.shelf .pill { width: 222px; padding-top: 1px; letter-spacing: .15px; }
.shelf .lat { letter-spacing: .25px; }
.canvas { position: relative; height: 715px; background: #fff; border: 1px solid #d0d0d0; padding-left: 8px; }
h1 { margin: 0; height: 60px; padding: 17px 0 0 5px; font: 300 28px/36px "Open Sans", sans-serif; letter-spacing: 1.800px; color: #333; }
.map { display: block; background: #ececec; }
.halo { stroke: #f6f6f6; stroke-width: 9; vector-effect: non-scaling-stroke; }
.dash { stroke: #858585; stroke-width: 1.100; stroke-dasharray: 3 2; vector-effect: non-scaling-stroke; }
.place { font: 400 12.500px "Open Sans", sans-serif; fill: #a3a3a3; stroke: #f4f4f4; stroke-width: 2; paint-order: stroke; }
.lab { font: 300 18px "Open Sans", sans-serif; fill: #000; stroke: #000; stroke-width: .15; }
.osm { position: absolute; left: 11px; bottom: 11px; height: 21px; padding: 0 4px 0 3px; background: rgba(255, 255, 255, .75); font: 400 16px/20px "Liberation Sans", Arial, sans-serif; color: #777; }
.sheets { height: 46px; background: #e6e6e6; border: 1px solid #c9c9c9; border-width: 1px 0; display: flex; color: #555; line-height: 44px; }
.sheet { flex: none; border-right: 1px solid #c9c9c9; padding: 1px 0 0 9px; display: flex; align-items: center; letter-spacing: -.08px; }
.src { width: 196px; padding-left: 12px; letter-spacing: 0; }
.src svg { margin-right: 6px; }
.sheet.active { background: #fafafa; font-weight: 700; padding: 0 0 0 8px; color: #444; letter-spacing: 0; }
.dash1 { width: 144px; letter-spacing: -.25px; }
.dash1 svg { margin-right: 5px; }
.newtab { width: 32px; padding-left: 6px; }
.status { height: 30px; background: #ebebeb; display: flex; font-size: 16px; line-height: 30px; padding-left: 3px; color: #111; }
.status > span { margin-right: 26px; }
.status .sum { letter-spacing: .66px; margin-left: -1px; }
.cells { margin-left: auto; display: flex; }
.cells i, .navs { border-left: 1px solid #d0d0d0; }
.cells i { flex: none; }
.navs { width: 73px; display: flex; align-items: center; padding-left: 8px; }
.modes { width: 75px; border-left: 1px solid #d0d0d0; display: flex; align-items: center; padding-left: 10px; }
.showme { position: absolute; left: 1609px; top: 72px; width: 306px; filter: drop-shadow(2px 2px 2px rgba(0, 0, 0, .3)); }
.smtab { position: relative; z-index: 1; margin-left: 156px; height: 54px; background: #fafafa; border: 1px solid #e0e0e0; border-bottom: 0; display: flex; padding: 15px 0 0 15px; font-size: 21px; line-height: 17px; letter-spacing: .2px; }
.smtab svg { margin-right: 7px; margin-top: 1px; flex: none; }
.smbody { height: 827px; margin-top: -1px; border: 1px solid #e0e0e0; background: #fafafa; padding: 22px 0 0 20px; }
.smgrid { display: grid; grid-template-columns: 83px 83px 83px; grid-auto-rows: 62px; gap: 7px; }
.cell { position: relative; background: #fff; }
.cell::after { content: ""; position: absolute; inset: 0; border: 1px solid #e0e0e0; }
.cell.on::after { inset: 0 -1px -1px 0; border: 3px solid #dc6937; border-radius: 2px; }
.cell svg { display: block; }
p { margin: 0; }
.for { margin-top: 26px; padding-left: 1px; font-size: 18.800px; }
.for b { font-weight: 700; }
.need { display: flex; align-items: center; height: 30px; margin-top: 12px; padding-left: 1px; }
.geo > span:first-child { word-spacing: -3px; letter-spacing: -.2px; }
.for + .need { margin-top: 11px; }
.need svg { margin-left: 3px; color: #555; }
.d1 { width: 126px; margin-left: 1px; }
.d2 { width: 136px; margin-left: 5px; }
.d3 { width: 119px; margin-left: 4px; }
.may { padding-left: 1px; margin-top: 16px; color: #777; line-height: 23px; letter-spacing: -.2px; }
</style>
